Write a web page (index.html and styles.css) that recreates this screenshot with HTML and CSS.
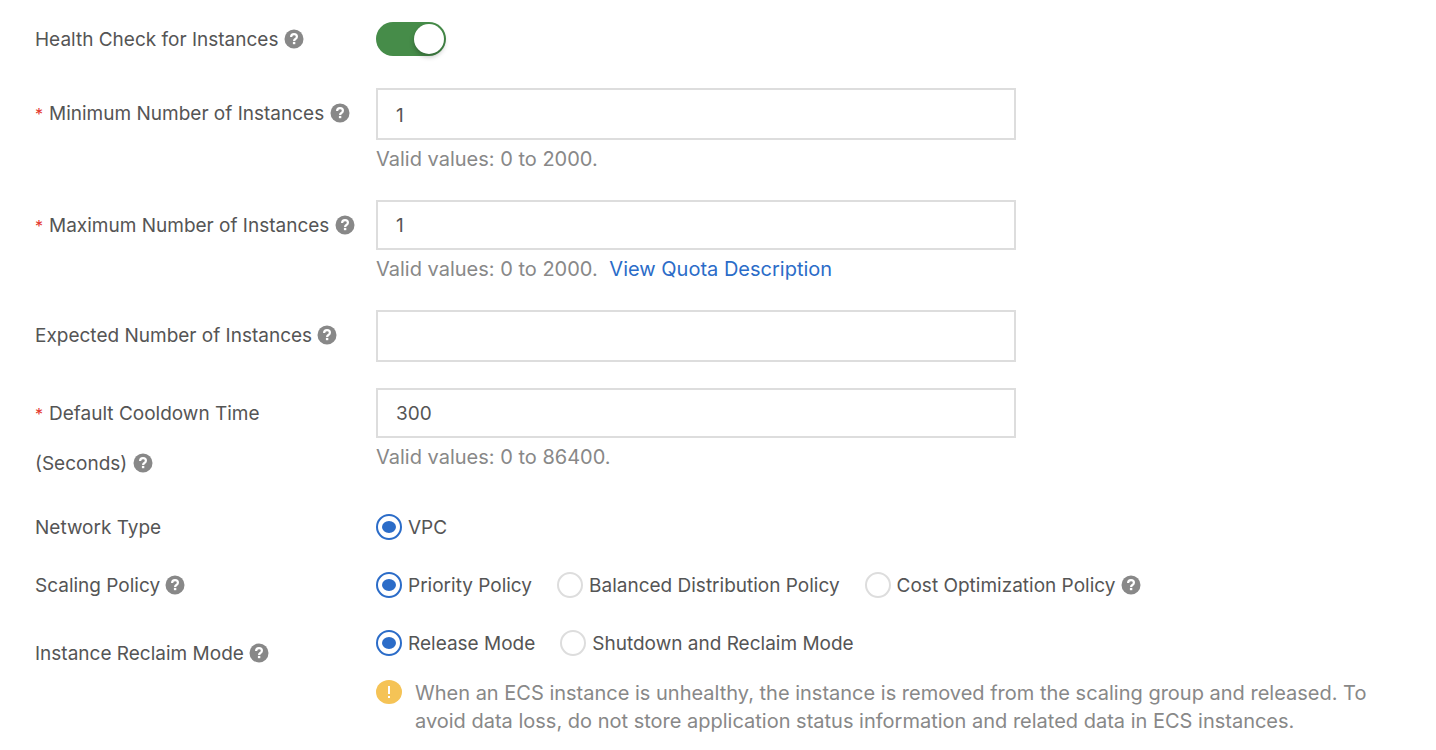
FILE: index.html
```html
<!DOCTYPE html>
<html lang="en">
<head>
<meta charset="utf-8">
<title>Scaling Group Settings</title>
<link rel="stylesheet" href="styles.css">
</head>
<body>
<svg class="sprite" aria-hidden="true">
  <symbol id="help" viewBox="0 0 20 20">
    <circle cx="10" cy="10" r="9.5" fill="#888"/>
    <path d="M7.1 7.9C7.1 6.1 8.3 5.2 10 5.2s2.9 1 2.9 2.5c0 1.2-.7 1.8-1.5 2.3-.9.6-1.3.9-1.3 1.9" fill="none" stroke="#fff" stroke-width="2.2"/>
    <rect x="8.9" y="12.9" width="2.4" height="2.3" fill="#fff"/>
  </symbol>
</svg>
<form class="form">
  <div class="row row-switch">
    <div class="label"><label for="health">Health Check for Instances</label> <svg class="help"><use href="#help"/></svg></div>
    <div class="field"><div class="line"><input class="switch" type="checkbox" role="switch" id="health" checked></div></div>
  </div>
  <div class="row row-hint">
    <div class="label"><span class="star">*</span><label for="min">Minimum Number of Instances</label> <svg class="help"><use href="#help"/></svg></div>
    <div class="field"><input class="text tall" type="text" id="min" value="1"><div class="hint">Valid values: 0 to 2000.</div></div>
  </div>
  <div class="row row-hint">
    <div class="label"><span class="star">*</span><label for="max">Maximum Number of Instances</label> <svg class="help"><use href="#help"/></svg></div>
    <div class="field"><input class="text" type="text" id="max" value="1"><div class="hint">Valid values: 0 to 2000. <a class="link" href="#">View Quota Description</a></div></div>
  </div>
  <div class="row row-plain">
    <div class="label"><label for="expected">Expected Number of Instances</label> <svg class="help"><use href="#help"/></svg></div>
    <div class="field"><input class="text tall" type="text" id="expected"></div>
  </div>
  <div class="row row-cooldown">
    <div class="label"><span class="star">*</span><label for="cooldown">Default Cooldown Time<br>(Seconds)</label> <svg class="help"><use href="#help"/></svg></div>
    <div class="field"><input class="text" type="text" id="cooldown" value="300"><div class="hint">Valid values: 0 to 86400.</div></div>
  </div>
  <div class="row row-radio">
    <div class="label">Network Type</div>
    <div class="field"><div class="line"><label class="option"><input class="radio" type="radio" name="network" checked><span class="option-text">VPC</span></label></div></div>
  </div>
  <div class="row row-radio">
    <div class="label">Scaling Policy <svg class="help"><use href="#help"/></svg></div>
    <div class="field"><div class="line">
      <label class="option"><input class="radio" type="radio" name="policy" checked><span class="option-text">Priority Policy</span></label>
      <label class="option"><input class="radio" type="radio" name="policy"><span class="option-text">Balanced Distribution Policy</span></label>
      <label class="option"><input class="radio" type="radio" name="policy"><span class="option-text">Cost Optimization Policy</span><svg class="help"><use href="#help"/></svg></label>
    </div></div>
  </div>
  <div class="row row-reclaim">
    <div class="label">Instance Reclaim Mode <svg class="help"><use href="#help"/></svg></div>
    <div class="field">
      <div class="line">
        <label class="option"><input class="radio" type="radio" name="reclaim" checked><span class="option-text">Release Mode</span></label>
        <label class="option"><input class="radio" type="radio" name="reclaim"><span class="option-text">Shutdown and Reclaim Mode</span></label>
      </div>
      <div class="notice">
        <svg class="warn" viewBox="0 0 26 24"><ellipse cx="13" cy="12" rx="13" ry="12" fill="#f5c356"/><path d="M12 6h2v8h-2zM12 16h2v2h-2z" fill="#fff"/></svg>
        <p class="notice-text">When an ECS instance is unhealthy, the instance is removed from the scaling group and released. To avoid data loss, do not store application status information and related data in ECS instances.</p>
      </div>
    </div>
  </div>
</form>
</body>
</html>
```
FILE: styles.css
```css
* { box-sizing: border-box; }
body {
  margin: 0;
  background: #fff;
  color: #555;
  font: 19px/50px Inter, "Liberation Sans", sans-serif;
}
.sprite { position: absolute; width: 0; height: 0; }
.form { padding: 14px 35px 0; }
.row { display: grid; grid-template-columns: 341px minmax(0, 1fr); }
.row-switch { margin-bottom: 23px; }
.row-hint { margin-bottom: 22px; }
.row-plain { margin-bottom: 26px; }
.row-cooldown { margin-bottom: 13px; }
.row-radio { margin-bottom: 7px; }
.row-reclaim .label { padding-top: 11px; }
.label { padding-top: 1px; white-space: nowrap; }
.star { color: #e3352b; font-size: 16px; margin-right: 6px; }
.help { width: 20px; height: 20px; vertical-align: -3px; }
.line { display: flex; align-items: center; gap: 25px; height: 50px; }
.switch {
  appearance: none;
  display: flex;
  width: 70px;
  height: 34px;
  margin: 0;
  padding: 2px;
  border-radius: 17px;
  background: #468c49;
  justify-content: flex-end;
}
.switch::before {
  content: "";
  width: 30px;
  height: 30px;
  border-radius: 50%;
  background: #fff;
  box-shadow: 0 3px 5px rgba(0, 0, 0, 0.25);
}
.switch:not(:checked) { background: #ccc; justify-content: flex-start; }
.text {
  display: block;
  width: 100%;
  max-width: 640px;
  height: 50px;
  padding: 0 18px;
  border: 2px solid #ddd;
  border-radius: 0;
  background: #fff;
  color: #555;
  font: inherit;
  line-height: 24px;
}
.tall { height: 52px; padding-top: 2px; }
.hint { color: #888; font-size: 20px; line-height: 38px; }
.link { color: #2b6cc8; text-decoration: none; margin-left: 6px; }
.option { display: flex; align-items: center; gap: 6px; white-space: nowrap; }
.option-text { padding-top: 1px; }
.radio {
  appearance: none;
  display: grid;
  place-items: center;
  width: 26px;
  height: 26px;
  margin: 0;
  border: 2px solid #ddd;
  border-radius: 50%;
  background: #fff;
}
.radio:checked { border-color: #2b6cc8; }
.radio:checked::before {
  content: "";
  width: 14px;
  height: 12px;
  border-radius: 50%;
  background: #2b6cc8;
}
.notice { display: flex; gap: 13px; margin-top: 11px; max-width: 1010px; color: #888; font-size: 20px; line-height: 28px; }
.warn { flex: none; width: 26px; height: 24px; margin-top: 1px; }
.notice-text { margin: 0; }
```
